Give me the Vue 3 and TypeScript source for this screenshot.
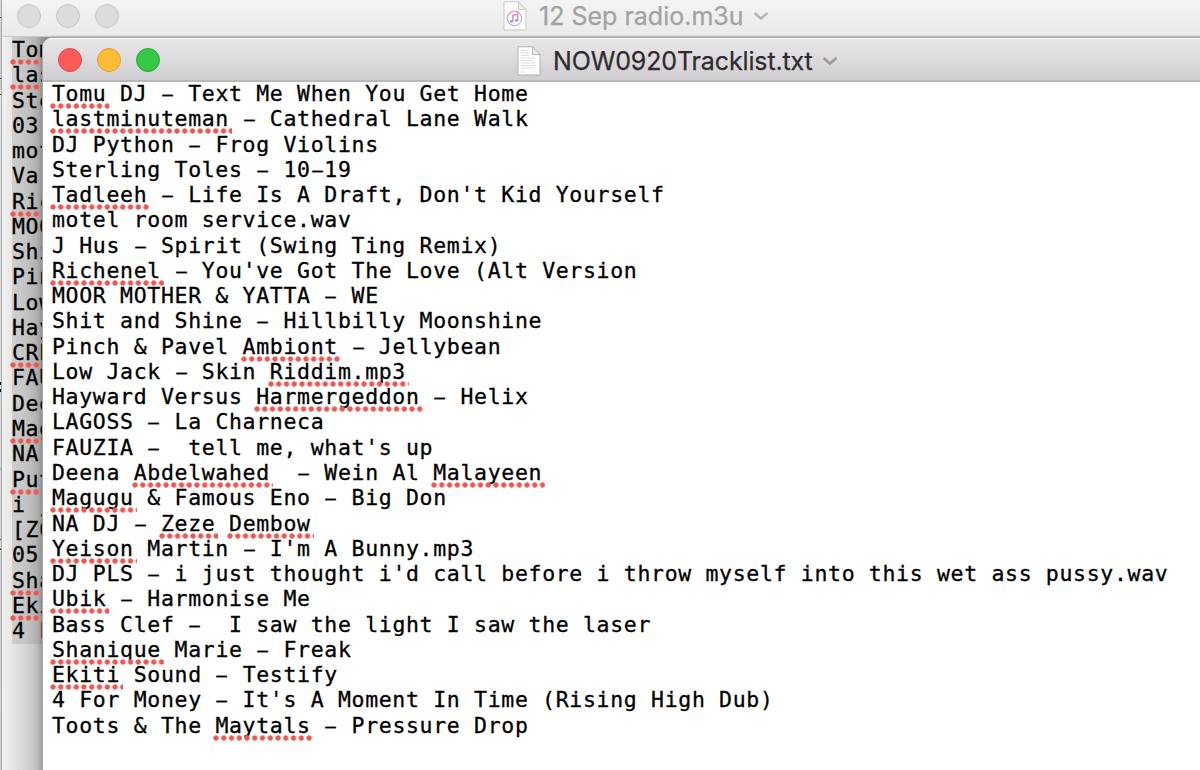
<script setup lang="ts">
interface Part { text: string; bad: boolean; dash: boolean }
// Words between underscores carry a spelling mark; dashes are set a little narrower.
function parse(source: string): Part[] {
  return source.split('_').flatMap((chunk, i) =>
    chunk.split(/(–)/).map(text => ({ text, bad: i % 2 === 1, dash: text === '–' })),
  ).filter(p => p.text !== '')
}
const tracks: Part[][] = [
  '_Tomu_ DJ – Text Me When You Get Home',
  '_lastminuteman_ – Cathedral Lane Walk',
  'DJ Python – Frog Violins',
  'Sterling Toles – 10–19',
  '_Tadleeh_ – Life Is A Draft, Don\'t Kid Yourself',
  'motel room service.wav',
  'J Hus – Spirit (Swing Ting Remix)',
  '_Richenel_ – You\'ve Got The Love (Alt Version',
  'MOOR MOTHER & YATTA – WE',
  'Shit and Shine – Hillbilly Moonshine',
  'Pinch & Pavel _Ambiont_ – Jellybean',
  'Low Jack – Skin _Riddim.mp3_',
  'Hayward Versus _Harmergeddon_ – Helix',
  'LAGOSS – La Charneca',
  'FAUZIA –  tell me, what\'s up',
  'Deena _Abdelwahed_  – Wein Al _Malayeen_',
  '_Magugu_ & Famous Eno – Big Don',
  'NA DJ – _Zeze_ _Dembow_',
  '_Yeison_ Martin – I\'m A Bunny.mp3',
  'DJ PLS – i just thought i\'d call before i throw myself into this wet ass pussy.wav',
  '_Ubik_ – Harmonise Me',
  'Bass Clef –  I saw the light I saw the laser',
  '_Shanique_ Marie – Freak',
  '_Ekiti_ Sound – Testify',
  '4 For Money – It\'s A Moment In Time (Rising High Dub)',
  'Toots & The _Maytals_ – Pressure Drop',
].map(parse)
const radio: Part[][] = [
  '_Tom_', '_las_', 'Ste', '03', 'mot', 'Va', '_Ric_', 'MOO', 'Shi', 'Pin', 'Low', 'Hay', '_CRE_', 'FAU', 'Dee',
  '_Mag_', 'NA', '_Put_', 'i j', '[Z0', '05', '_Sha_', '_Eki_', '4 F',
].map(parse)
</script>

<template>
  <main class="desktop">
    <div class="edge">
      <i class="tick t1"></i><i class="tick t2"></i><i class="tick t3"></i>
      <span class="bit b1">s</span><span class="bit b2">x</span><span class="bit b3">:</span>
    </div>
    <section class="window back">
      <header class="bar">
        <div class="lights"><i></i><i></i><i></i></div>
        <div class="title">
          <svg class="doc" width="24" height="30" viewBox="0 0 24 30">
            <path d="M1 .8H15.5L23 8.500V29H1Z" fill="#fbfbfb" stroke="#c9c9c9" />
            <path d="M15.500 .8V8.500H23Z" fill="#ececec" stroke="#cecece" />
            <circle cx="11.500" cy="17.500" r="7.200" fill="#fdf8fc" stroke="#b9b4ea" stroke-width="1.200" />
            <path d="M4.300 17.500a7.200 7.200 0 0 1 12-5.400" fill="none" stroke="#eda8bd" stroke-width="1.200" />
            <path d="M9.800 20V14.300L14.700 13.200V19" fill="none" stroke="#d98fc0" stroke-width="1.500" />
            <ellipse cx="8.700" cy="20.300" rx="1.700" ry="1.400" fill="#7fa4e8" /><ellipse cx="13.600" cy="19.300" rx="1.700" ry="1.400" fill="#9a98e4" />
          </svg>
          <span class="name">12 Sep radio.m3u</span>
          <svg class="chev" width="16" height="10" viewBox="0 0 16 10"><path d="M1.500 2 8 7.500 14.500 2" /></svg>
        </div>
      </header>
      <div class="selection">
        <div v-for="(line, i) in radio" :key="i" class="line"><span v-for="(p, j) in line" :key="j" :class="{ bad: p.bad, dash: p.dash }">{{ p.text }}</span></div>
      </div>
    </section>
    <section class="window front">
      <header class="bar">
        <div class="lights"><i class="red"></i><i class="yellow"></i><i class="green"></i></div>
        <div class="title">
          <svg class="doc" width="24" height="30" viewBox="0 0 24 30">
            <path d="M1 .8H15.5L23 8.500V29H1Z" fill="#fff" stroke="#b0aeb0" />
            <path d="M15.500 .8V8.500H23Z" fill="#ebebeb" stroke="#b9b9b9" />
            <path d="M4 4.500h6M4 7h8M4 9.500h8M4 12h14M4 14.500h12M4 17h14M4 19.500h14M4 22h14M4 26h4" stroke="#d8d8d8" stroke-width=".9" />
          </svg>
          <span class="name">NOW0920Tracklist.txt</span>
          <svg class="chev" width="16" height="10" viewBox="0 0 16 10"><path d="M1.500 2 8 7.500 14.500 2" /></svg>
        </div>
      </header>
      <div class="page">
        <div v-for="(line, i) in tracks" :key="i" class="line"><span v-for="(p, j) in line" :key="j" :class="{ bad: p.bad, dash: p.dash }">{{ p.text }}</span></div>
      </div>
    </section>
  </main>
</template>

<style>
body { margin: 0; overflow: hidden; }
</style>
<style scoped>
.desktop { position: relative; width: 1200px; height: 770px; overflow: hidden; background: #dcdcdc; font-family: Inter, "Liberation Sans", sans-serif; }
.edge { position: absolute; inset: 0 auto 0 0; width: 3px; overflow: hidden; background: linear-gradient(#dadada, #c9c9c9 85px, #e6e6e6 95px, #d2d2d2); }
.tick { position: absolute; left: 0; width: 3px; height: 1px; background: #444; }
.t1 { top: 17px; } .t2 { top: 78px; } .t3 { top: 94px; }
.bit { position: absolute; right: 1px; font: 20px/20px "DejaVu Sans Mono", monospace; color: #111; }
.b1 { top: 455px; } .b2 { top: 533px; } .b3 { top: 375px; right: -3px; }
.window { position: absolute; overflow: hidden; box-sizing: border-box; }
.back { left: 1px; top: -8px; width: 1210px; height: 790px; border-left: 1px solid #a8a8a8; border-radius: 9px 0 0 0; background: linear-gradient(90deg, #f2f2f2, #e9e9e9 8px, #dadada 20px, #c6c6c6 32px, #a4a4a4 41px); }
.front { left: 43px; top: 38px; width: 1170px; height: 740px; border-radius: 9px 0 0 0; background: #fff; box-shadow: 0 0 0 1px #aaa, 0 0 4px rgba(0,0,0,.25); }
.bar { display: flex; align-items: center; position: relative; box-sizing: border-box; }
.back .bar { height: 45px; padding: 3px 0 0 15px; background: linear-gradient(#f6f6f6, #eaeaea); border-bottom: 1px solid #c8c8c8; }
.front .bar { height: 44px; padding: 0 0 0 15px; background: linear-gradient(#e8e6e8, #d0ced0); border-top: 1px solid #fff; border-bottom: 2px solid #b9b8b9; }
.lights { display: flex; gap: 15px; }
.lights i { width: 24px; height: 24px; box-sizing: border-box; border-radius: 50%; background: #dcdcdc; border: 1px solid #c6c6c6; }
.lights .red { background: #fc5b57; border-color: #df4744; }
.lights .yellow { background: #fdbc35; border-color: #dea033; }
.lights .green { background: #34c748; border-color: #29ab36; }
.title { display: flex; align-items: center; position: absolute; top: 0; height: 100%; white-space: nowrap; }
.back .title { left: 501px; padding-top: 4px; color: #a2a2a2; box-sizing: border-box; }
.front .title { left: 474px; padding-top: 2px; box-sizing: border-box; color: #2e2c2e; }
.name { margin: 0 9px 0 12px; font-size: 25px; line-height: 30px; -webkit-text-stroke: .25px currentColor; }
.front .name { letter-spacing: -.13px; }
.chev path { fill: none; stroke: #9b999b; stroke-width: 2.500; }
.back .chev path { stroke: #b5b5b5; }
.line { height: 25.28px; line-height: 25.28px; white-space: pre; font-family: "DejaVu Sans Mono", monospace; font-size: 21.500px; letter-spacing: .67px; color: #000; -webkit-text-stroke: .3px #000; }
.page { padding-left: 9px; margin-top: -1px; }
.selection { margin-left: 10px; padding-top: 0; height: 607px; background: linear-gradient(90deg, #cfcfcf, #c4c4c4 14px, #b2b2b2 24px, #949494 31px); }
.dash { display: inline-block; line-height: 20px; transform: scaleX(.82); }
.bad { position: relative; }
.bad::after { content: ""; position: absolute; left: -2px; right: -3px; bottom: -3px; height: 6px; background: radial-gradient(circle at 3px 3px, #ee5652 0 2px, rgba(243,100,96,.75) 2.500px, transparent 3.100px) 0 0 / 7.750px 6px repeat-x; }
</style>
